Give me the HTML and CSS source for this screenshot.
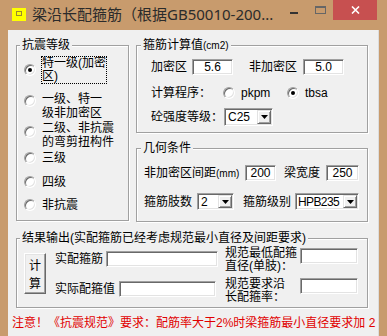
FILE: index.html
```html
<!DOCTYPE html>
<html lang="zh-CN">
<head>
<meta charset="utf-8">
<title>梁沿长配箍筋</title>
<link rel="stylesheet" href="styles.css">
</head>
<body>
<div class="window">
  <header class="titlebar">
    <svg class="appicon" width="14" height="13" viewBox="0 0 14 13"><rect x="0" y="0" width="14" height="13" fill="#ffff00"/><rect x="4.5" y="3.5" width="5" height="4" fill="none" stroke="#9a8a30"/></svg>
    <span class="title">梁沿长配箍筋（根据GB50010-200...</span>
    <div class="caption">
      <span class="cap-btn cap-min"><svg width="8" height="2"><rect width="8" height="2" fill="#333"/></svg></span>
      <span class="cap-btn cap-max"><svg width="11" height="8"><rect x="0.5" y="0.5" width="10" height="7" fill="none" stroke="#666"/><line x1="0" y1="1.5" x2="11" y2="1.5" stroke="#666"/></svg></span>
      <span class="cap-btn cap-close"><svg width="9" height="8" viewBox="0 0 9 8"><path d="M1 0.5 L8 7.5 M8 0.5 L1 7.5" stroke="#fff" stroke-width="1.6"/></svg></span>
    </div>
  </header>
  <main class="client">
    <div class="top">
      <section class="group g1">
        <span class="legend">抗震等级</span>
        <div class="opts">
          <div class="opt r1"><span class="radio on"></span><span class="focus">特一级(加密<br>区)</span></div>
          <div class="opt r2"><span class="radio"></span><span class="ml">一级、特一<br>级非加密区</span></div>
          <div class="opt r3"><span class="radio"></span><span class="ml">二级、非抗震<br>的弯剪扭构件</span></div>
          <div class="opt r4"><span class="radio"></span><span>三级</span></div>
          <div class="opt r5"><span class="radio"></span><span>四级</span></div>
          <div class="opt r6"><span class="radio"></span><span>非抗震</span></div>
        </div>
      </section>
      <div class="right">
        <section class="group g2">
          <span class="legend">箍筋计算值<span class="sm">(cm2)</span></span>
          <div class="row g2a">
            <span class="lbl w41">加密区</span>
            <span class="edit w41">5.6</span>
            <span class="lbl w70 pl16">非加密区</span>
            <span class="edit w41">5.0</span>
          </div>
          <div class="row g2b">
            <span class="lbl w72">计算程序：</span>
            <span class="rb w64"><span class="radio"></span><span>pkpm</span></span>
            <span class="rb"><span class="radio on"></span><span>tbsa</span></span>
          </div>
          <div class="row g2c">
            <span class="lbl w73">砼强度等级：</span>
            <span class="combo w49 h18"><span class="val">C25</span><span class="dd"><svg width="7" height="4"><path d="M0 0H7L3.5 4Z" fill="#000"/></svg></span></span>
          </div>
        </section>
        <section class="group g3">
          <span class="legend">几何条件</span>
          <div class="row g3a">
            <span class="lbl w101">非加密区间距<span class="sm">(mm)</span></span>
            <span class="edit w31">200</span>
            <span class="lbl w50 pl8">梁宽度</span>
            <span class="edit w33">250</span>
          </div>
          <div class="row g3b">
            <span class="lbl w53">箍筋肢数</span>
            <span class="combo w37 h17"><span class="val">2</span><span class="dd"><svg width="7" height="4"><path d="M0 0H7L3.5 4Z" fill="#000"/></svg></span></span>
            <span class="lbl w61 pl9">箍筋级别</span>
            <span class="combo w64 h17"><span class="val tight">HPB235</span><span class="dd"><svg width="7" height="4"><path d="M0 0H7L3.5 4Z" fill="#000"/></svg></span></span>
          </div>
        </section>
      </div>
    </div>
    <section class="group g4">
      <span class="legend">结果输出(实配箍筋已经考虑规范最小直径及间距要求)</span>
      <div class="g4body">
        <button class="calc" type="button">计<br>算</button>
        <div class="mid">
          <div class="mrow m1"><span class="lbl w51">实配箍筋</span><span class="edit w112 h17"></span></div>
          <div class="mrow m2"><span class="lbl w64">实际配箍值</span><span class="edit w97 h17"></span></div>
        </div>
        <div class="side">
          <div class="srow s1"><span class="lbl2">规范最低配箍<br>直径(单肢)：</span><span class="edit w58 h17 mt1"></span></div>
          <div class="srow s2"><span class="lbl2">规范要求沿<br>长配箍率：</span><span class="edit w58 h17"></span></div>
        </div>
      </div>
    </section>
    <p class="note">注意！《抗震规范》要求：配筋率大于2%时梁箍筋最小直径要求加 2</p>
  </main>
</div>
</body>
</html>
```
FILE: styles.css
```css
html, body {
  margin: 0;
  padding: 0;
}
body {
  width: 387px;
  height: 336px;
  overflow: hidden;
  background: #c89b6d;
  font-family: "Liberation Sans", "Noto Sans CJK SC", sans-serif;
  font-size: 12px;
  color: #000;
}
.window {
  display: flex;
  flex-direction: column;
  height: 336px;
}
.titlebar {
  flex: none;
  height: 30px;
  display: flex;
  align-items: flex-start;
}
.appicon {
  margin: 8px 0 0 12px;
  flex: none;
}
.title {
  margin: 5px 0 0 6px;
  font: 15px/18px "Noto Sans", "Noto Sans CJK SC", sans-serif;
  color: #2b2b2b;
  white-space: nowrap;
}
.caption {
  margin-left: auto;
  margin-right: 10px;
  display: flex;
}
.cap-btn {
  box-sizing: border-box;
  width: 26px;
  height: 20px;
  display: flex;
  justify-content: center;
  align-items: flex-start;
}
.cap-btn svg { display: block; }
.cap-min { padding-top: 12px; }
.cap-max { padding-top: 6px; }
.cap-close {
  width: 44px;
  background: #c75050;
  padding-top: 6px;
}

.client {
  flex: 1;
  width: 371px;
  margin-left: 8px;
  box-sizing: border-box;
  padding-top: 15px;
  background: #f0f0f0;
  border-right: 1px solid #dcdcdc;
  overflow: hidden;
}
.top {
  display: flex;
  align-items: flex-start;
  gap: 7px;
  margin-left: 8px;
}
.right {
  display: flex;
  flex-direction: column;
  gap: 15px;
}
.group {
  box-sizing: border-box;
  border: 1px solid #a0a0a0;
  box-shadow: inset 1px 1px 0 #fff, 1px 1px 0 #fff;
}
.legend {
  display: block;
  width: max-content;
  margin: -8px 0 0 3px;
  padding: 0 2px;
  line-height: 14px;
  background: #f0f0f0;
  white-space: nowrap;
}
.sm { font-size: 10px; }
.g1 { width: 113px; height: 176px; }
.g2 { width: 232px; height: 88px; }
.g3 { width: 232px; height: 74px; }
.g2 .legend, .g3 .legend { margin-left: 4px; }
.g4 { width: 352px; height: 70px; margin: 16px 0 0 8px; }

/* radios */
.radio {
  position: relative;
  flex: none;
  box-sizing: border-box;
  width: 12px;
  height: 12px;
  border-radius: 50%;
  background: #fff;
  border: 1px solid;
  border-color: #a0a0a0 #fff #fff #a0a0a0;
  box-shadow: inset 1px 1px 0 #696969, inset -1px -1px 0 #e3e3e3;
}
.radio.on::after {
  content: "";
  position: absolute;
  left: 3px;
  top: 3px;
  width: 4px;
  height: 4px;
  border-radius: 50%;
  background: #000;
}

/* group 1 options */
.opts { padding-left: 7px; }
.opt {
  display: flex;
  align-items: center;
  gap: 6px;
  height: 14px;
  line-height: 14px;
  white-space: nowrap;
}
.opt.r1, .opt.r2, .opt.r3 { height: 28px; align-items: flex-start; }
.r1 { margin-top: 4px; }
.r1 .radio { margin-top: 8px; }
.r2 { margin-top: 8px; }
.r2 .radio { margin-top: 3px; }
.r3 { margin-top: 1px; }
.r3 .radio { margin-top: 5px; }
.r4 { margin-top: 2px; }
.r5 { margin-top: 10px; }
.r6 { margin-top: 9px; }
.focus {
  box-sizing: border-box;
  width: 66px;
  height: 28px;
  margin-left: -1px;
  border: 1px dotted #000;
  line-height: 13px;
}
.ml { line-height: 14px; }

/* rows */
.row {
  display: flex;
  align-items: center;
  white-space: nowrap;
}
.g2 .row { padding-left: 14px; }
.g3 .row { padding-left: 7px; }
.g2a { margin-top: 6px; height: 16px; }
.g2b { margin-top: 11px; height: 14px; }
.g2c { margin-top: 8px; height: 18px; }
.g3a { margin-top: 10px; height: 16px; }
.g3b { margin-top: 12px; height: 17px; }

.lbl { flex: none; box-sizing: border-box; line-height: 14px; white-space: nowrap; }
.w41 { width: 41px; }
.w70 { width: 70px; }
.w72 { width: 72px; }
.w73 { width: 73px; }
.w101 { width: 101px; }
.w50 { width: 50px; }
.w53 { width: 53px; }
.w61 { width: 61px; }
.w51 { width: 51px; }
.w64 { width: 64px; }
.w31 { width: 31px; }
.w33 { width: 33px; }
.w37 { width: 37px; }
.w49 { width: 49px; }
.w58 { width: 58px; }
.w97 { width: 97px; }
.w112 { width: 112px; }
.pl8 { padding-left: 8px; }
.pl9 { padding-left: 9px; }
.pl16 { padding-left: 16px; }
.h17 { height: 17px; }
.h18 { height: 18px; }
.mt1 { margin-top: 1px; }

.rb {
  flex: none;
  display: flex;
  align-items: center;
  gap: 6px;
}

.edit {
  flex: none;
  box-sizing: border-box;
  height: 16px;
  background: #fff;
  border: 1px solid;
  border-color: #a0a0a0 #fff #fff #a0a0a0;
  box-shadow: inset 1px 1px 0 #696969, inset -1px -1px 0 #e3e3e3;
  font-size: 12px;
  line-height: 14px;
  text-align: center;
}

.combo {
  flex: none;
  display: flex;
  box-sizing: border-box;
  background: #fff;
  border: 1px solid;
  border-color: #a0a0a0 #fff #fff #a0a0a0;
  box-shadow: inset 1px 1px 0 #696969, inset -1px -1px 0 #e3e3e3;
  padding: 1px;
}
.combo .val {
  flex: 1;
  padding-left: 2px;
  font-size: 12px;
  line-height: 14px;
  white-space: nowrap;
}
.combo .val.tight {
  padding-left: 1px;
  letter-spacing: -0.6px;
}
.combo .dd {
  flex: none;
  box-sizing: border-box;
  width: 14px;
  background: #f0f0f0;
  border: 1px solid;
  border-color: #e3e3e3 #696969 #696969 #e3e3e3;
  box-shadow: inset 1px 1px 0 #fff, inset -1px -1px 0 #a0a0a0;
  display: flex;
  align-items: center;
  justify-content: center;
}
.combo .dd svg { display: block; }

/* group 4 */
.g4body {
  display: flex;
  align-items: flex-start;
  padding-left: 7px;
}
.calc {
  flex: none;
  box-sizing: border-box;
  width: 22px;
  height: 41px;
  margin-top: 8px;
  padding: 0;
  background: #f0f0f0;
  border: 1px solid;
  border-color: #fff #696969 #696969 #fff;
  box-shadow: inset -1px -1px 0 #a0a0a0, inset 1px 1px 0 #e3e3e3;
  font-family: "Noto Sans CJK SC", sans-serif;
  font-size: 12px;
  line-height: 18px;
  color: #000;
}
.mid {
  margin: 5px 0 0 9px;
  display: flex;
  flex-direction: column;
}
.mrow {
  display: flex;
  align-items: center;
  height: 17px;
}
.m2 { margin-top: 13px; }
.side {
  margin: 2px 0 0 7px;
  display: flex;
  flex-direction: column;
}
.srow {
  display: flex;
  align-items: flex-start;
}
.s2 { margin-top: 5px; }
.lbl2 {
  flex: none;
  width: 75px;
  line-height: 13px;
  white-space: nowrap;
}

.note {
  margin: 7px 0 0 4px;
  color: #e10000;
  font-family: "Liberation Sans", "Noto Sans CJK SC", sans-serif;
  font-size: 12px;
  line-height: 16px;
  white-space: nowrap;
}
```
